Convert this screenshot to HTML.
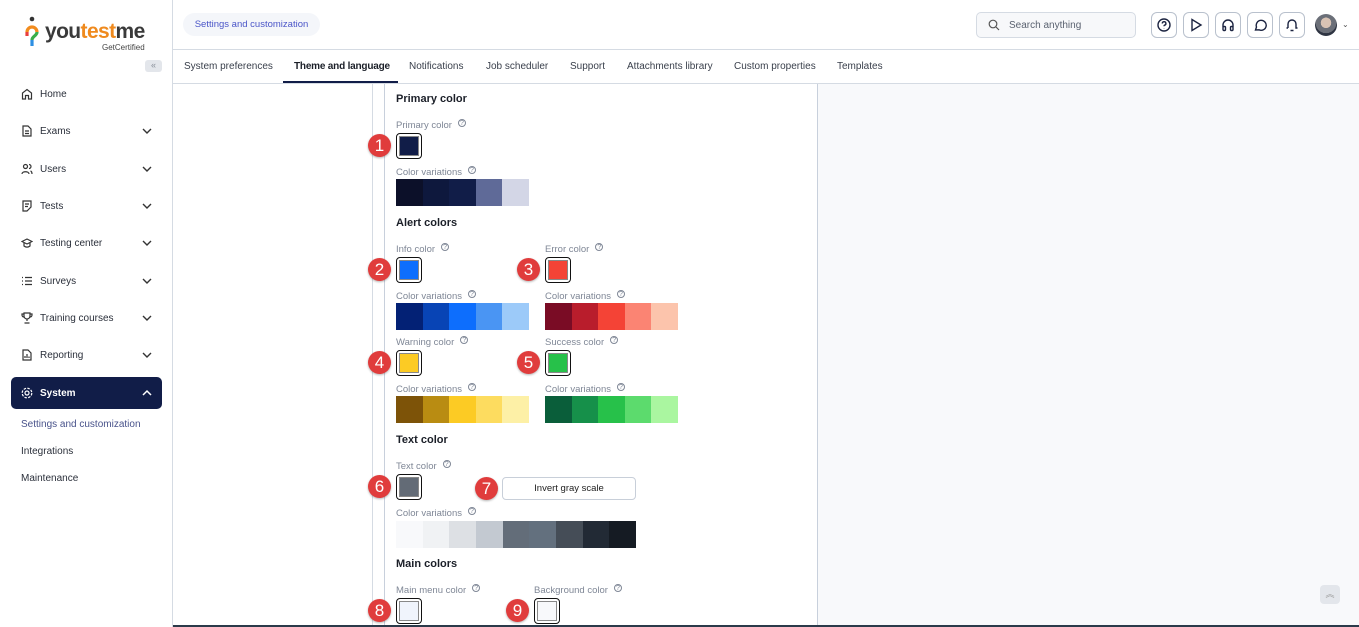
<!DOCTYPE html>
<html><head><meta charset="utf-8"><style>
*{box-sizing:border-box;margin:0;padding:0}
body{width:1359px;height:627px;overflow:hidden;background:#fff;font-family:"Liberation Sans",sans-serif;color:#1f2430;position:relative}
.a{position:absolute}
.side{left:0;top:0;width:173px;height:627px;border-right:1px solid #d5dbe3;background:#fff}
.nav{left:21px;font-size:10px;color:#2a2f3a;display:flex;align-items:center}
.nav svg{margin-right:7px}
.chev{left:141px}
.sub{left:21px;font-size:10px;color:#2a2f3a}
.h{font-size:11px;font-weight:bold;color:#1b1f28}
.lbl{font-size:9.5px;color:#7f8796}
.lbl i{font-style:normal;font-size:7px;margin-left:6px;vertical-align:3px;border:1px solid #7f8796;border-radius:50%;width:8px;height:8px;display:inline-block;text-align:center;line-height:7px;color:#7f8796}
.sw{width:26px;height:26px;border:1.5px solid #111;border-radius:4px;padding:2px}
.sw div{width:100%;height:100%;border:1px solid #888}
.b{width:23px;height:23px;border-radius:50%;background:#e03c3c;color:#fff;font-size:17px;text-align:center;line-height:23px;box-shadow:0 1px 2px rgba(0,0,0,.3)}
.strip{display:flex;height:27px}
.strip div{flex:1}
.tab{top:61px;font-size:10px;color:#3a404c}
.ib{top:12px;width:26px;height:26px;border:1px solid #b9c1cd;border-radius:6px;display:flex;align-items:center;justify-content:center}
</style></head><body>
<div class="a side"></div>
<!-- logo -->
<div class="a" style="left:24px;top:16px;width:16px;height:34px">
<svg width="16" height="34" viewBox="0 0 16 34"><circle cx="8" cy="3" r="2.3" fill="#333"/><path d="M3 16a5 5 0 0 1 10 0" stroke="#f28c1e" stroke-width="3.2" fill="none"/><path d="M13 16c0 4-5 4-5 8" stroke="#3aae4a" stroke-width="3.2" fill="none"/><path d="M3 16v4" stroke="#e83e3e" stroke-width="3.2"/><path d="M8 24v6" stroke="#2d8fe3" stroke-width="3.2"/></svg></div>
<div class="a" style="left:45px;top:20px;font-size:21px;font-weight:bold;letter-spacing:-0.6px;color:#3a3a3a">you<span style="color:#ef8a1e">test</span>me</div>
<div class="a" style="left:102px;top:43px;font-size:8px;color:#444">GetCertified</div>
<div class="a" style="left:145px;top:60px;width:17px;height:12px;background:#e3e6eb;border-radius:3px;font-size:9px;color:#8a909b;text-align:center;line-height:11px">«</div>

<div class="a nav" style="top:88px"><svg width="12" height="12" viewBox="0 0 12 12" fill="none" stroke="#333" stroke-width="1.2"><path d="M1.5 11V5L6 1.5 10.5 5v6H7.5V7.5h-3V11z"/></svg>Home</div>
<div class="a nav" style="top:125px"><svg width="12" height="12" viewBox="0 0 12 12" fill="none" stroke="#333" stroke-width="1.2"><path d="M2 1h5l3 3v7H2z M4 6h4M4 8.5h4"/></svg>Exams</div>
<div class="a nav" style="top:163px"><svg width="12" height="12" viewBox="0 0 12 12" fill="none" stroke="#333" stroke-width="1.2"><circle cx="4.5" cy="3.5" r="2"/><path d="M1 11c0-3 7-3 7 0M8 1.5a2 2 0 0 1 0 4M9.5 8c1.5 .5 1.5 2 1.5 3"/></svg>Users</div>
<div class="a nav" style="top:200px"><svg width="12" height="12" viewBox="0 0 12 12" fill="none" stroke="#333" stroke-width="1.2"><path d="M2 1h8v6l-4 4H2zM4 4h4M4 6.5h3"/></svg>Tests</div>
<div class="a nav" style="top:237px"><svg width="12" height="12" viewBox="0 0 12 12" fill="none" stroke="#333" stroke-width="1.2"><path d="M1 4.5 6 2l5 2.5L6 7zM3 6v3c2 1.5 4 1.5 6 0V6"/></svg>Testing center</div>
<div class="a nav" style="top:275px"><svg width="12" height="12" viewBox="0 0 12 12" fill="none" stroke="#333" stroke-width="1.3"><path d="M1 2.5h1M4 2.5h7M1 6h1M4 6h7M1 9.5h1M4 9.5h7"/></svg>Surveys</div>
<div class="a nav" style="top:312px"><svg width="12" height="12" viewBox="0 0 12 12" fill="none" stroke="#333" stroke-width="1.2"><path d="M3 1h6v3a3 3 0 0 1-6 0zM3 2H1v1a2 2 0 0 0 2 2M9 2h2v1a2 2 0 0 1-2 2M6 7v2M3.5 11h5"/></svg>Training courses</div>
<div class="a nav" style="top:349px"><svg width="12" height="12" viewBox="0 0 12 12" fill="none" stroke="#333" stroke-width="1.2"><path d="M2 1h5l3 3v7H2zM4 9V7M6 9V5M8 9V7.5"/></svg>Reporting</div>
<svg class="a chev" style="top:127px" width="12" height="8" viewBox="0 0 12 8"><path d="M2 2l4 4 4-4" stroke="#333" stroke-width="1.4" fill="none"/></svg>
<svg class="a chev" style="top:165px" width="12" height="8" viewBox="0 0 12 8"><path d="M2 2l4 4 4-4" stroke="#333" stroke-width="1.4" fill="none"/></svg>
<svg class="a chev" style="top:202px" width="12" height="8" viewBox="0 0 12 8"><path d="M2 2l4 4 4-4" stroke="#333" stroke-width="1.4" fill="none"/></svg>
<svg class="a chev" style="top:239px" width="12" height="8" viewBox="0 0 12 8"><path d="M2 2l4 4 4-4" stroke="#333" stroke-width="1.4" fill="none"/></svg>
<svg class="a chev" style="top:277px" width="12" height="8" viewBox="0 0 12 8"><path d="M2 2l4 4 4-4" stroke="#333" stroke-width="1.4" fill="none"/></svg>
<svg class="a chev" style="top:314px" width="12" height="8" viewBox="0 0 12 8"><path d="M2 2l4 4 4-4" stroke="#333" stroke-width="1.4" fill="none"/></svg>
<svg class="a chev" style="top:351px" width="12" height="8" viewBox="0 0 12 8"><path d="M2 2l4 4 4-4" stroke="#333" stroke-width="1.4" fill="none"/></svg>
<div class="a" style="left:11px;top:377px;width:151px;height:32px;background:#111d48;border-radius:5px"></div>
<div class="a nav" style="top:387px;color:#fff;font-weight:bold"><svg width="12" height="12" viewBox="0 0 12 12" fill="none" stroke="#fff" stroke-width="1.2"><circle cx="6" cy="6" r="2"/><circle cx="6" cy="6" r="4.8" stroke-dasharray="2.5 1.3"/></svg>System</div>
<svg class="a chev" style="top:389px" width="12" height="8" viewBox="0 0 12 8"><path d="M2 6l4-4 4 4" stroke="#fff" stroke-width="1.5" fill="none"/></svg>
<div class="a sub" style="top:419px;color:#48528a">Settings and customization</div>
<div class="a sub" style="top:446px">Integrations</div>
<div class="a sub" style="top:473px">Maintenance</div>

<!-- header -->
<div class="a" style="left:173px;top:49px;width:1186px;height:1px;background:#d5dbe3"></div>
<div class="a" style="left:183px;top:13px;width:137px;height:23px;background:#f4f6fa;border-radius:12px;font-size:9.5px;color:#4a55c8;line-height:23px;text-align:center">Settings and customization</div>
<div class="a" style="left:976px;top:12px;width:160px;height:26px;border:1px solid #d5dbe3;border-radius:5px;background:#f7f8fa;font-size:10px;color:#5a6270;line-height:26px;padding-left:32px">Search anything</div>
<svg class="a" style="left:988px;top:19px" width="12" height="12" viewBox="0 0 12 12" fill="none" stroke="#555" stroke-width="1.2"><circle cx="5" cy="5" r="3.8"/><path d="M8 8l3 3"/></svg>
<div class="a ib" style="left:1151px"><svg width="14" height="14" viewBox="0 0 14 14" fill="none" stroke="#1b2340" stroke-width="1.4"><circle cx="7" cy="7" r="6"/><path d="M5.3 5.5a1.8 1.8 0 1 1 2.3 1.7c-.5.2-.6.6-.6 1.1M7 10v.3"/></svg></div>
<div class="a ib" style="left:1183px"><svg width="14" height="14" viewBox="0 0 14 14" fill="none" stroke="#1b2340" stroke-width="1.4"><path d="M3 1.5v11l9-5.5z"/></svg></div>
<div class="a ib" style="left:1215px"><svg width="14" height="14" viewBox="0 0 14 14" fill="none" stroke="#1b2340" stroke-width="1.4"><path d="M2 9V7a5 5 0 0 1 10 0v2"/><rect x="2" y="8.5" width="2.5" height="4" rx="1"/><rect x="9.5" y="8.5" width="2.5" height="4" rx="1"/></svg></div>
<div class="a ib" style="left:1247px"><svg width="14" height="14" viewBox="0 0 14 14" fill="none" stroke="#1b2340" stroke-width="1.4"><path d="M2.5 12l1-3A5 5 0 1 1 6 11.8z"/></svg></div>
<div class="a ib" style="left:1279px"><svg width="14" height="14" viewBox="0 0 14 14" fill="none" stroke="#1b2340" stroke-width="1.4"><path d="M3 10V6a4 4 0 0 1 8 0v4h1.5M1.5 10H3M5.5 12.5h3"/></svg></div>
<div class="a" style="left:1315px;top:14px;width:22px;height:22px;border-radius:50%;background:radial-gradient(circle at 50% 40%,#d9c3b4 0 30%,#6b6f78 31% 60%,#2e3442 61%)"></div>
<div class="a" style="left:1342px;top:20px;font-size:8px;color:#555">⌄</div>

<!-- tabs -->
<div class="a" style="left:173px;top:83px;width:1186px;height:1px;background:#d5dbe3"></div>
<div class="a tab" style="left:184px">System preferences</div>
<div class="a tab" style="left:294px;font-weight:bold;color:#1b1f28;letter-spacing:-0.2px">Theme and language</div>
<div class="a" style="left:283px;top:81px;width:115px;height:2px;background:#111d48"></div>
<div class="a tab" style="left:409px">Notifications</div>
<div class="a tab" style="left:486px">Job scheduler</div>
<div class="a tab" style="left:570px">Support</div>
<div class="a tab" style="left:627px">Attachments library</div>
<div class="a tab" style="left:734px">Custom properties</div>
<div class="a tab" style="left:837px">Templates</div>

<!-- content frame -->
<div class="a" style="left:372px;top:84px;width:1px;height:543px;background:#d5dbe3"></div>
<div class="a" style="left:384px;top:84px;width:1px;height:543px;background:#c8d0dc"></div>
<div class="a" style="left:817px;top:84px;width:542px;height:543px;background:#f8f9fb;border-left:1px solid #c8d0dc"></div>
<div class="a" style="left:1320px;top:585px;width:20px;height:19px;background:#e3e6eb;border-radius:4px;font-size:9px;color:#999;text-align:center;line-height:19px">︽</div>
<div class="a" style="left:173px;top:625px;width:1186px;height:2px;background:#2b3a4a"></div>

<div class="a h" style="left:396px;top:93px">Primary color</div>
<div class="a lbl" style="left:396px;top:119px">Primary color<i>?</i></div>
<div class="a sw" style="left:396px;top:133px"><div style="background:#111d48"></div></div>
<div class="a b" style="left:368px;top:134px">1</div>
<div class="a lbl" style="left:396px;top:166px">Color variations<i>?</i></div>
<div class="a strip" style="left:396px;top:179px;width:133px"><div style="background:#0c1029"></div><div style="background:#0e183d"></div><div style="background:#111d48"></div><div style="background:#5f6a98"></div><div style="background:#d3d6e6"></div></div>

<div class="a h" style="left:396px;top:217px">Alert colors</div>
<div class="a lbl" style="left:396px;top:243px">Info color<i>?</i></div>
<div class="a sw" style="left:396px;top:257px"><div style="background:#0d6efd"></div></div>
<div class="a b" style="left:368px;top:258px">2</div>
<div class="a lbl" style="left:545px;top:243px">Error color<i>?</i></div>
<div class="a sw" style="left:545px;top:257px"><div style="background:#f44336"></div></div>
<div class="a b" style="left:517px;top:258px">3</div>
<div class="a lbl" style="left:396px;top:290px">Color variations<i>?</i></div>
<div class="a strip" style="left:396px;top:303px;width:133px"><div style="background:#032175"></div><div style="background:#0844b5"></div><div style="background:#0d6efd"></div><div style="background:#4a95f3"></div><div style="background:#9ccaf9"></div></div>
<div class="a lbl" style="left:545px;top:290px">Color variations<i>?</i></div>
<div class="a strip" style="left:545px;top:303px;width:133px"><div style="background:#7a0c25"></div><div style="background:#b91d2c"></div><div style="background:#f44336"></div><div style="background:#fb8473"></div><div style="background:#fcc4ac"></div></div>

<div class="a lbl" style="left:396px;top:336px">Warning color<i>?</i></div>
<div class="a sw" style="left:396px;top:350px"><div style="background:#fccb24"></div></div>
<div class="a b" style="left:368px;top:351px">4</div>
<div class="a lbl" style="left:545px;top:336px">Success color<i>?</i></div>
<div class="a sw" style="left:545px;top:350px"><div style="background:#27c14a"></div></div>
<div class="a b" style="left:517px;top:351px">5</div>
<div class="a lbl" style="left:396px;top:383px">Color variations<i>?</i></div>
<div class="a strip" style="left:396px;top:396px;width:133px"><div style="background:#7d5308"></div><div style="background:#b98c12"></div><div style="background:#fccb24"></div><div style="background:#fddc5f"></div><div style="background:#fdf0a6"></div></div>
<div class="a lbl" style="left:545px;top:383px">Color variations<i>?</i></div>
<div class="a strip" style="left:545px;top:396px;width:133px"><div style="background:#0a5e3a"></div><div style="background:#16904a"></div><div style="background:#27c14a"></div><div style="background:#5cdb6d"></div><div style="background:#aaf6a0"></div></div>

<div class="a h" style="left:396px;top:434px">Text color</div>
<div class="a lbl" style="left:396px;top:460px">Text color<i>?</i></div>
<div class="a sw" style="left:396px;top:474px"><div style="background:#636b76"></div></div>
<div class="a b" style="left:368px;top:475px">6</div>
<div class="a b" style="left:475px;top:477px">7</div>
<div class="a" style="left:502px;top:477px;width:134px;height:23px;border:1px solid #c8cfd9;border-radius:4px;font-size:9.5px;color:#222;text-align:center;line-height:21px">Invert gray scale</div>
<div class="a lbl" style="left:396px;top:507px">Color variations<i>?</i></div>
<div class="a strip" style="left:396px;top:521px;width:240px"><div style="background:#f8f9fb"></div><div style="background:#f0f2f4"></div><div style="background:#dde0e4"></div><div style="background:#c3c9d1"></div><div style="background:#636d79"></div><div style="background:#63707e"></div><div style="background:#454d57"></div><div style="background:#222a35"></div><div style="background:#151b23"></div></div>

<div class="a h" style="left:396px;top:558px">Main colors</div>
<div class="a lbl" style="left:396px;top:584px">Main menu color<i>?</i></div>
<div class="a sw" style="left:396px;top:598px"><div style="background:#f0f4fc"></div></div>
<div class="a b" style="left:368px;top:599px">8</div>
<div class="a lbl" style="left:534px;top:584px">Background color<i>?</i></div>
<div class="a sw" style="left:534px;top:598px"><div style="background:#f8f9fb"></div></div>
<div class="a b" style="left:506px;top:599px">9</div>
</body></html>
